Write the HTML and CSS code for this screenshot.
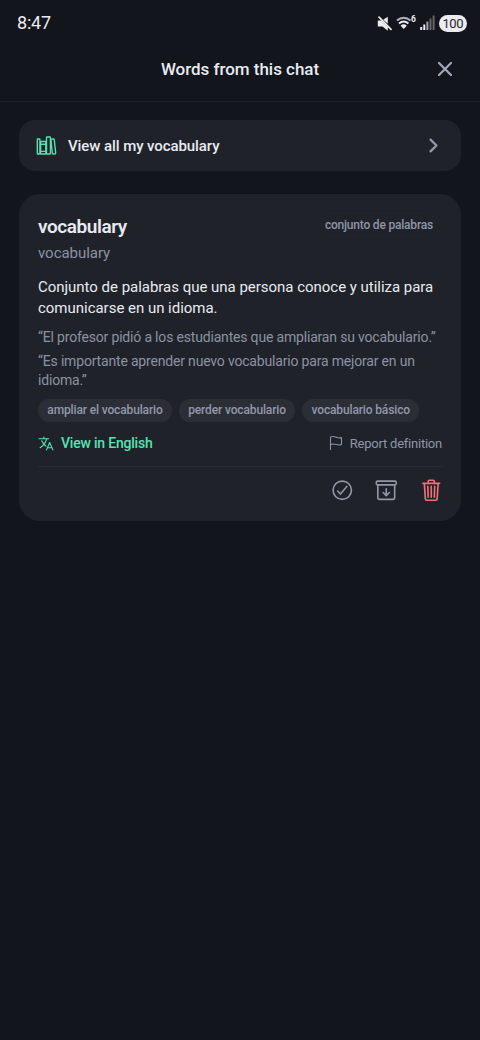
FILE: index.html
```html
<!DOCTYPE html>
<html lang="es">
<head>
<meta charset="utf-8">
<title>Words from this chat</title>
<link rel="stylesheet" href="styles.css">
</head>
<body>
<div class="screen">
  <div class="status">
    <span class="clock">8:47</span>
    <div class="tray">
      <svg class="mute" width="15" height="15" viewBox="0 0 15 15"><path d="M.8 4.500h3.400L10.800 11v3.800L5.500 10.600H.8zM10.800.8v7L6.200 3.800z" fill="#ececf0"/><path d="M2 1.200l12 12.200" stroke="#ececf0" stroke-width="1.700" stroke-linecap="round"/></svg>
      <svg class="wifi" width="21" height="16" viewBox="0 0 21 16"><g fill="none" stroke="#ececf0" stroke-width="1.900"><path d="M.9 5.500Q7.700-.2 14.500 5.500" stroke="#b4b5ba"/><path d="M3 8.500q4.700-4.200 9.400 0"/></g><path d="M4.600 10.700q3.100-2.700 6.200 0L7.700 14z" fill="#ececf0"/><text x="15" y="7.200" class="gen">6</text></svg>
      <svg class="signal" width="15" height="16" viewBox="0 0 15 16"><path d="M.2 12h2v3h-2zM3.300 9.500h2V15h-2z" fill="#ececf0"/><path d="M6.400 6.600h2V15h-2z" fill="#a2a3a8"/><path d="M9.500 3.500h2V15h-2zM12.600.5h2V15h-2z" fill="#65676c"/></svg>
      <span class="battery">100</span>
    </div>
  </div>
  <header class="header">
    <h1 class="title">Words from this chat</h1>
    <svg class="close" width="16" height="16" viewBox="0 0 16 16"><path d="M2 2l12 12M14 2L2 14" fill="none" stroke="#a3a8b8" stroke-width="2.200" stroke-linecap="round"/></svg>
  </header>
  <main class="content">
    <div class="link-card">
      <svg class="books" width="21" height="21" viewBox="0 0 512 512" fill="none" stroke="#57e2b4" stroke-width="34" stroke-linejoin="round"><rect x="32" y="96" width="64" height="368" rx="16"/><path d="M112 224h128M112 400h128" stroke-linecap="round"/><rect x="112" y="160" width="128" height="304" rx="16"/><rect x="256" y="48" width="96" height="416" rx="16"/><path d="M422.460 96.110l-40.400 4.250c-11.120 1.170-19.180 11.570-17.930 23.100l34.920 321.590c1.260 11.530 11.370 20 22.490 18.840l40.400-4.250c11.120-1.170 19.180-11.570 17.930-23.100L445 115c-1.310-11.580-11.420-20.060-22.540-18.890z"/></svg>
      <span class="link-text">View all my vocabulary</span>
      <svg class="chevron" width="21" height="21" viewBox="0 0 512 512"><path d="M184 112l144 144-144 144" fill="none" stroke="#9297a8" stroke-width="56" stroke-linecap="round" stroke-linejoin="round"/></svg>
    </div>
    <article class="word-card">
      <div class="word-head">
        <h2 class="word">vocabulary</h2>
        <span class="gloss">conjunto de palabras</span>
      </div>
      <p class="lemma">vocabulary</p>
      <p class="definition">Conjunto de palabras que una persona conoce y utiliza para<br>comunicarse en un idioma.</p>
      <p class="example">“El profesor pidió a los estudiantes que ampliaran su vocabulario.”</p>
      <p class="example">“Es importante aprender nuevo vocabulario para mejorar en un<br>idioma.”</p>
      <div class="chips">
        <span class="chip">ampliar el vocabulario</span>
        <span class="chip">perder vocabulario</span>
        <span class="chip">vocabulario básico</span>
      </div>
      <div class="links">
        <span class="translate"><svg width="17" height="17" viewBox="16 0 512 512" fill="none" stroke="#57e2b4" stroke-width="34" stroke-linecap="round" stroke-linejoin="round"><path d="M48 112h288M192 64v48M272 448l96-224 96 224M301.500 384h133M281.300 112S257 206 199 277 80 384 80 384"/><path d="M256 336s-35-27-72-75-56-85-56-85"/></svg>View in English</span>
        <span class="report"><svg width="16" height="16" viewBox="0 0 512 512" fill="none" stroke="#8e95a8" stroke-width="34" stroke-linecap="round" stroke-miterlimit="10"><path d="M80 464V68.140a8 8 0 014-6.900C91.810 56.660 112.920 48 160 48c64 0 145 48 192 48a199.530 199.530 0 0077.230-15.770 2 2 0 012.770 1.850v219.360a4 4 0 01-2.390 3.650C421.370 308.700 392.330 320 352 320c-48 0-128-32-192-32s-80 16-80 16"/></svg>Report definition</span>
      </div>
      <div class="actions">
        <svg width="24.500" height="24.500" viewBox="0 0 512 512" fill="none" stroke="#9297a8" stroke-width="34"><path d="M448 256c0-106-86-192-192-192S64 150 64 256s86 192 192 192 192-86 192-192z" stroke-miterlimit="10"/><path d="M352 176L217.600 336 160 272" stroke-linecap="round" stroke-linejoin="round"/></svg>
        <svg width="24.500" height="24.500" viewBox="0 0 512 512" fill="none" stroke="#9297a8" stroke-width="34" stroke-linejoin="round" stroke-linecap="round"><path d="M80 152v256a40.120 40.120 0 0040 40h272a40.120 40.120 0 0040-40V152"/><rect x="48" y="64" width="416" height="80" rx="28"/><path d="M320 304l-64 64-64-64M256 345.890V224"/></svg>
        <svg width="24.500" height="24.500" viewBox="0 0 512 512" fill="none" stroke="#f07078" stroke-width="34" stroke-linecap="round" stroke-linejoin="round"><path d="M112 112l20 320c.95 18.490 14.400 32 32 32h184c17.670 0 30.870-13.510 32-32l20-320M80 112h352"/><path d="M192 112V72a23.930 23.930 0 0124-24h80a23.930 23.930 0 0124 24v40M256 176v224M184 176l8 224M328 176l-8 224"/></svg>
      </div>
    </article>
  </main>
</div>
</body>
</html>
```
FILE: styles.css
```css
body {
  margin: 0;
  background: #12151c;
  color: #e8eaf2;
  font-family: Roboto, sans-serif;
}
h1, h2, p { margin: 0; }
svg { display: block; flex: none; }
.status {
  box-sizing: border-box;
  height: 46px;
  padding: 0 13px 0 17px;
  display: flex;
  align-items: center;
  justify-content: space-between;
}
.clock { font-size: 18px; line-height: 22px; letter-spacing: -0.2px; color: #ececf0; }
.tray { display: flex; align-items: center; }
.mute { margin-right: 4px; }
.wifi { margin-right: 3px; }
.gen { font: 700 8.5px Roboto, sans-serif; fill: #ececf0; }
.signal { margin-right: 4px; }
.battery {
  width: 28px;
  height: 17px;
  border-radius: 9px;
  background: #ececf0;
  color: #24262c;
  font-size: 13px;
  line-height: 17px;
  letter-spacing: -0.5px;
  text-indent: -0.5px;
  text-align: center;
}
.header {
  box-sizing: border-box;
  height: 56px;
  padding: 0 27px 9px 43px;
  display: flex;
  align-items: center;
  border-bottom: 1px solid #1d2027;
}
.title {
  flex: 1;
  text-align: center;
  font-size: 17px;
  font-weight: 500;
  line-height: 24px;
  letter-spacing: -0.03px;
}
.content { padding: 18px 19px; }
.link-card {
  box-sizing: border-box;
  height: 51px;
  border-radius: 16px;
  padding: 0 17px 0 16.5px;
  background: #202229;
  display: flex;
  align-items: center;
}
.link-text {
  flex: 1;
  margin-left: 11.5px;
  font-size: 15px;
  font-weight: 500;
  letter-spacing: -0.08px;
}
.word-card {
  box-sizing: border-box;
  height: 327px;
  margin-top: 23px;
  padding: 19px 19px 0;
  border-radius: 21px;
  background: #202229;
  white-space: nowrap;
}
.word-head { display: flex; justify-content: space-between; height: 28px; }
.word { font-size: 19px; font-weight: 600; line-height: 28px; letter-spacing: -0.44px; }
.gloss {
  box-sizing: border-box;
  height: 24px;
  padding: 0 8px;
  border: 1px solid #22242a;
  border-radius: 12px;
  font-size: 12px;
  font-weight: 500;
  line-height: 22px;
  letter-spacing: -0.2px;
  color: #8e95a8;
}
.lemma { margin-top: 2px; font-size: 15px; line-height: 20px; letter-spacing: -0.04px; color: #8b92a5; }
.definition { margin-top: 14px; font-size: 15px; line-height: 21px; letter-spacing: -0.022px; }
.example { margin-top: 5px; font-size: 14px; line-height: 19px; letter-spacing: -0.18px; color: #8b92a5; }
.definition + .example { margin-top: 9px; }
.chips { display: flex; gap: 7px; margin-top: 9px; }
.chip {
  height: 23px;
  padding: 0 9.3px;
  border-radius: 12px;
  background: #2c2e36;
  font-size: 12px;
  font-weight: 500;
  line-height: 23px;
  letter-spacing: -0.14px;
  color: #9298ab;
}
.links { display: flex; justify-content: space-between; height: 20px; margin-top: 11px; }
.translate, .report { display: flex; align-items: center; }
.translate { font-size: 14px; font-weight: 500; letter-spacing: -0.2px; color: #57e2b4; gap: 6px; }
.report { font-size: 13px; letter-spacing: -0.23px; color: #8e95a8; gap: 6px; }
.actions {
  margin: 13px -1px 0 0;
  padding-top: 11px;
  border-top: 1px solid #292b32;
  display: flex;
  justify-content: flex-end;
  gap: 20px;
}
```
